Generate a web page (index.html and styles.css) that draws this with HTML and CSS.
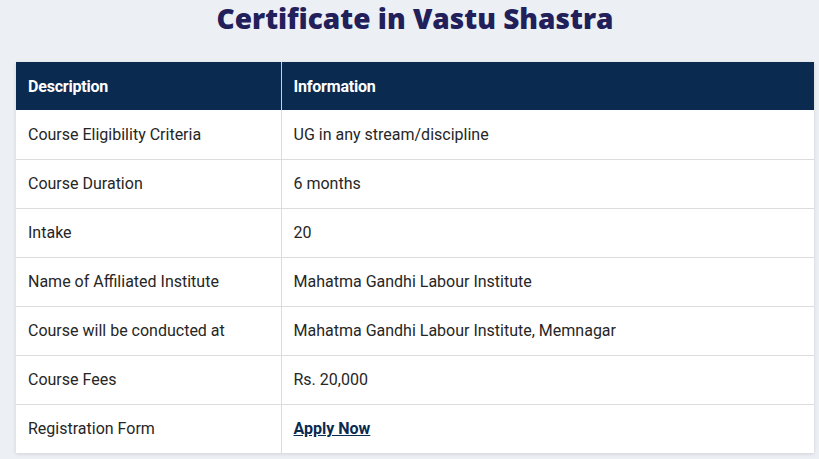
FILE: index.html
```html
<!DOCTYPE html>
<html>
<head>
<meta charset="utf-8">
<link rel="stylesheet" href="styles.css">
</head>
<body>
<div class="page">
  <h1 class="title">Certificate in Vastu Shastra</h1>
  <table class="info">
    <thead>
      <tr><th class="c1">Description</th><th>Information</th></tr>
    </thead>
    <tbody>
      <tr><td class="c1">Course Eligibility Criteria</td><td>UG in any stream/discipline</td></tr>
      <tr><td class="c1">Course Duration</td><td>6 months</td></tr>
      <tr><td class="c1">Intake</td><td>20</td></tr>
      <tr><td class="c1">Name of Affiliated Institute</td><td>Mahatma Gandhi Labour Institute</td></tr>
      <tr><td class="c1">Course will be conducted at</td><td>Mahatma Gandhi Labour Institute, Memnagar</td></tr>
      <tr><td class="c1">Course Fees</td><td>Rs. 20,000</td></tr>
      <tr><td class="c1">Registration Form</td><td><a class="apply" href="#">Apply Now</a></td></tr>
    </tbody>
  </table>
</div>
</body>
</html>
```
FILE: styles.css
```css
html, body { margin: 0; padding: 0; }
body {
  background: #eceff3;
  font-family: Roboto, "Liberation Sans", sans-serif;
  width: 819px;
  height: 459px;
  overflow: hidden;
}
.page {
  padding: 0 5px 0 16px;
}
.title {
  margin: 0;
  padding-top: 0;
  height: 62px;
  box-sizing: border-box;
  text-align: center;
  font-family: "Open Sans", "DejaVu Sans", sans-serif;
  font-weight: 800;
  font-size: 28px;
  line-height: 36px;
  color: #22205a;
}
.info {
  width: 798px;
  border-collapse: collapse;
  background: #fff;
  box-shadow: 0 1px 4px rgba(0,0,0,0.12);
}
.info th {
  background: #0a2a50;
  color: #fff;
  text-align: left;
  font-weight: 700;
  font-size: 16px;
  height: 48px;
  padding: 0 12px;
  box-sizing: border-box;
  border-left: 1px solid #c9d0da;
  letter-spacing: -0.2px;
}
.info th.c1 { border-left: none; }
.info td {
  font-size: 16px;
  color: #262626;
  height: 49px;
  padding: 0 12px;
  box-sizing: border-box;
  border-top: 1px solid #dcdcdc;
  border-left: 1px solid #dcdcdc;
}
.info td.c1 { border-left: none; width: 265px; }
.info tbody tr:first-child td { border-top: none; }
.apply {
  color: #0a2a50;
  font-weight: 700;
  text-decoration: underline;
}
```
